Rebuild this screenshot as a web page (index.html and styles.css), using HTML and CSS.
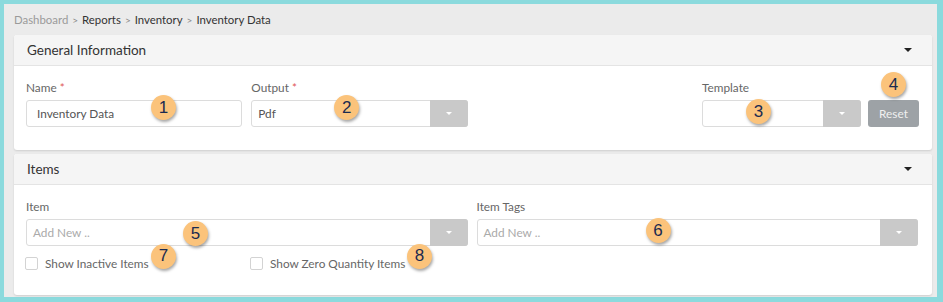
FILE: index.html
```html
<!DOCTYPE html>
<html>
<head>
<meta charset="utf-8">
<link rel="stylesheet" href="styles.css">
</head>
<body>
<div class="frame">
  <div class="crumbs">
    <span class="crumb-muted">Dashboard</span><span class="sep">&gt;</span><span>Reports</span><span class="sep">&gt;</span><span>Inventory</span><span class="sep">&gt;</span><span>Inventory Data</span>
  </div>

  <div class="panel panel-general">
    <div class="panel-head"><span>General Information</span><span class="caret"></span></div>
    <div class="panel-body grid4">
      <div class="field">
        <label class="lbl">Name <span class="req">*</span></label>
        <div class="input"><span class="val">Inventory Data</span></div>
        <span class="badge b1">1</span>
      </div>
      <div class="field">
        <label class="lbl">Output <span class="req">*</span></label>
        <div class="input select"><span class="val">Pdf</span><span class="dd"><i></i></span></div>
        <span class="badge b2">2</span>
      </div>
      <div class="field"></div>
      <div class="field">
        <label class="lbl">Template</label>
        <div class="tmpl-row">
          <div class="input select tmpl"><span class="val"></span><span class="dd"><i></i></span></div>
          <button class="reset">Reset</button>
        </div>
        <span class="badge b3">3</span>
        <span class="badge b4">4</span>
      </div>
    </div>
  </div>

  <div class="panel panel-items">
    <div class="panel-head"><span>Items</span><span class="caret"></span></div>
    <div class="panel-body">
      <div class="grid2">
        <div class="field">
          <label class="lbl">Item</label>
          <div class="input select"><span class="ph">Add New ..</span><span class="dd"><i></i></span></div>
          <span class="badge b5">5</span>
        </div>
        <div class="field">
          <label class="lbl">Item Tags</label>
          <div class="input select"><span class="ph">Add New ..</span><span class="dd"><i></i></span></div>
          <span class="badge b6">6</span>
        </div>
      </div>
      <div class="checks">
        <label class="chk chk1"><span class="box"></span>Show Inactive Items<span class="badge b7">7</span></label>
        <label class="chk chk2"><span class="box"></span>Show Zero Quantity Items<span class="badge b8">8</span></label>
      </div>
    </div>
  </div>
</div>
</body>
</html>
```

FILE: styles.css
```css
* { box-sizing: border-box; }
html, body { margin: 0; padding: 0; }
body {
  width: 943px;
  height: 302px;
  background: #8bdadd;
  font-family: Lato, "Open Sans", "Liberation Sans", sans-serif;
  color: #333;
  overflow: hidden;
}
.frame {
  position: absolute;
  left: 4px;
  top: 4px;
  width: 933px;
  height: 293px;
  background: #ebebeb;
  padding: 0 5px 0 10px;
}
.crumbs {
  height: 31px;
  display: flex;
  align-items: center;
  font-size: 11.4px;
  color: #333;
}
.crumb-muted { color: #9a9a9a; }
.sep { color: #888; margin: 0 4px; font-size: 10px; }

.panel {
  background: #fff;
  border-radius: 3px;
  box-shadow: 0 1px 2px rgba(0,0,0,0.12);
}
.panel-general { height: 115px; }
.panel-items { margin-top: 4px; height: 141px; }
.panel-head {
  height: 31px;
  background: #f5f5f5;
  border-bottom: 1px solid #e4e4e4;
  border-radius: 3px 3px 0 0;
  display: flex;
  align-items: center;
  justify-content: space-between;
  padding: 0 20px 0 13px;
  font-size: 13.5px;
  color: #333;
}
.caret {
  width: 0; height: 0;
  border-left: 4px solid transparent;
  border-right: 4px solid transparent;
  border-top: 4px solid #222;
}
.panel-body { padding: 14px 13px 0 12px; }
.grid4 {
  display: grid;
  grid-template-columns: repeat(4, 1fr);
  column-gap: 9px;
}
.grid2 {
  display: grid;
  grid-template-columns: 1fr 1fr;
  column-gap: 9px;
  padding-right: 1px;
}
.field { position: relative; }
.lbl {
  display: block;
  font-size: 11.8px;
  color: #666;
  height: 16px;
  line-height: 16px;
  margin-bottom: 4px;
}
.req { color: #e05555; }
.input {
  height: 27px;
  border: 1px solid #dcdcdc;
  border-radius: 3px;
  background: #fff;
  display: flex;
  align-items: center;
  font-size: 11.8px;
  color: #555;
  padding-left: 10px;
  position: relative;
}
.select { padding-left: 6px; }
.select .val { flex: 1; }
.select .ph { flex: 1; color: #aaa; }
.dd {
  width: 38px;
  height: 27px;
  margin: -1px -1px -1px 0;
  background: #c9c9c9;
  border-radius: 0 3px 3px 0;
  display: flex;
  align-items: center;
  justify-content: center;
}
.dd i {
  width: 0; height: 0;
  border-left: 3px solid transparent;
  border-right: 3px solid transparent;
  border-top: 3px solid #fff;
}
.tmpl-row { display: flex; gap: 7px; }
.tmpl { width: 159px; flex: none; }
.reset {
  width: 51px;
  height: 27px;
  border: none;
  border-radius: 3px;
  background: #9da2a6;
  color: #f0f0f0;
  font-family: inherit;
  font-size: 11.8px;
  padding: 0;
}
.checks {
  display: flex;
  height: 34px;
  align-items: center;
  margin-left: -1px;
}
.chk {
  display: flex;
  align-items: center;
  font-size: 11.8px;
  color: #666;
  position: relative;
}
.chk1 { width: 225px; }
.box {
  width: 13px; height: 13px;
  border: 1px solid #d3d3d3;
  border-radius: 2px;
  background: #fff;
  margin-right: 7px;
}
.badge {
  position: absolute;
  width: 25px; height: 25px;
  border-radius: 50%;
  background: #fbc37b;
  color: #1a2a50;
  font-size: 17px;
  display: flex;
  align-items: center;
  justify-content: center;
  box-shadow: 1px 2px 3px rgba(0,0,0,0.35);
  font-family: "Liberation Sans", Arial, sans-serif;
}
.b1 { left: 125px; top: 15px; }
.b2 { left: 83px; top: 15px; }
.b3 { left: 44px; top: 19px; }
.b4 { left: 179px; top: -8px; }
.b5 { left: 157px; top: 22px; }
.b6 { left: 169px; top: 19px; }
.b7 { left: 126px; top: -12px; }
.b8 { left: 157px; top: -12px; }
```
